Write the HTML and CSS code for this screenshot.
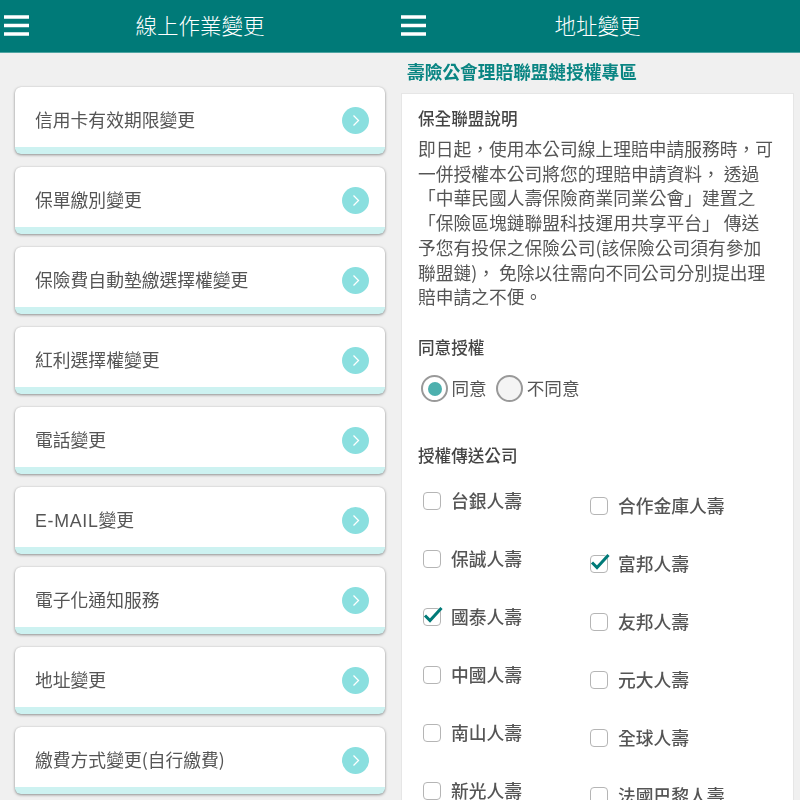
FILE: index.html
```html
<!DOCTYPE html>
<html lang="zh-Hant">
<head>
<meta charset="utf-8">
<title>線上作業變更</title>
<link rel="stylesheet" href="styles.css">
</head>
<body>
<div class="screens">
  <section class="screen">
    <header class="bar">
      <svg class="menu" width="26" height="21" viewBox="0 0 26 21"><path d="M0 2h25M0 10.500h25M0 19h25" stroke="#fff" stroke-width="3.500"/></svg>
      <h1 class="bar-title">線上作業變更</h1>
    </header>
    <div class="cards">
      <a class="card"><span class="card-body"><span class="card-text">信用卡有效期限變更</span><svg class="go" width="27" height="27" viewBox="0 0 27 27"><circle cx="13.5" cy="13.5" r="13.5" fill="#8adfdf"/><path d="M11.5 8.5l5 5-5 5" fill="none" stroke="#fff" stroke-width="1.3"/></svg></span></a>
      <a class="card"><span class="card-body"><span class="card-text">保單繳別變更</span><svg class="go" width="27" height="27" viewBox="0 0 27 27"><circle cx="13.5" cy="13.5" r="13.5" fill="#8adfdf"/><path d="M11.5 8.5l5 5-5 5" fill="none" stroke="#fff" stroke-width="1.3"/></svg></span></a>
      <a class="card"><span class="card-body"><span class="card-text">保險費自動墊繳選擇權變更</span><svg class="go" width="27" height="27" viewBox="0 0 27 27"><circle cx="13.5" cy="13.5" r="13.5" fill="#8adfdf"/><path d="M11.5 8.5l5 5-5 5" fill="none" stroke="#fff" stroke-width="1.3"/></svg></span></a>
      <a class="card"><span class="card-body"><span class="card-text">紅利選擇權變更</span><svg class="go" width="27" height="27" viewBox="0 0 27 27"><circle cx="13.5" cy="13.5" r="13.5" fill="#8adfdf"/><path d="M11.5 8.5l5 5-5 5" fill="none" stroke="#fff" stroke-width="1.3"/></svg></span></a>
      <a class="card"><span class="card-body"><span class="card-text">電話變更</span><svg class="go" width="27" height="27" viewBox="0 0 27 27"><circle cx="13.5" cy="13.5" r="13.5" fill="#8adfdf"/><path d="M11.5 8.5l5 5-5 5" fill="none" stroke="#fff" stroke-width="1.3"/></svg></span></a>
      <a class="card"><span class="card-body"><span class="card-text"><span class="latin">E-MAIL</span>變更</span><svg class="go" width="27" height="27" viewBox="0 0 27 27"><circle cx="13.5" cy="13.5" r="13.5" fill="#8adfdf"/><path d="M11.5 8.5l5 5-5 5" fill="none" stroke="#fff" stroke-width="1.3"/></svg></span></a>
      <a class="card"><span class="card-body"><span class="card-text">電子化通知服務</span><svg class="go" width="27" height="27" viewBox="0 0 27 27"><circle cx="13.5" cy="13.5" r="13.5" fill="#8adfdf"/><path d="M11.5 8.5l5 5-5 5" fill="none" stroke="#fff" stroke-width="1.3"/></svg></span></a>
      <a class="card"><span class="card-body"><span class="card-text">地址變更</span><svg class="go" width="27" height="27" viewBox="0 0 27 27"><circle cx="13.5" cy="13.5" r="13.5" fill="#8adfdf"/><path d="M11.5 8.5l5 5-5 5" fill="none" stroke="#fff" stroke-width="1.3"/></svg></span></a>
      <a class="card"><span class="card-body"><span class="card-text">繳費方式變更(自行繳費)</span><svg class="go" width="27" height="27" viewBox="0 0 27 27"><circle cx="13.5" cy="13.5" r="13.5" fill="#8adfdf"/><path d="M11.5 8.5l5 5-5 5" fill="none" stroke="#fff" stroke-width="1.3"/></svg></span></a>
    </div>
  </section>
  <section class="screen">
    <header class="bar bar-right">
      <svg class="menu menu-right" width="26" height="21" viewBox="0 0 26 21"><path d="M0 2h25M0 10.500h25M0 19h25" stroke="#fff" stroke-width="3.500"/></svg>
      <h1 class="bar-title">地址變更</h1>
    </header>
    <h2 class="zone-title">壽險公會理賠聯盟鏈授權專區</h2>
    <div class="panel">
      <h3 class="label first">保全聯盟說明</h3>
      <p class="intro">即日起&#xFF0C;使用本公司線上理賠申請服務時&#xFF0C;可<br>一併授權本公司將您的理賠申請資料&#xFF0C; 透過<br>「中華民國人壽保險商業同業公會」建置之<br>「保險區塊鏈聯盟科技運用共享平台」 傳送<br>予您有投保之保險公司(該保險公司須有參加<br>聯盟鏈)&#xFF0C; 免除以往需向不同公司分別提出理<br>賠申請之不便。</p>
      <h3 class="label agree-label">同意授權</h3>
      <div class="radios">
        <span class="radio on"></span><span class="radio-text">同意</span>
        <span class="radio"></span><span class="radio-text">不同意</span>
      </div>
      <h3 class="label company-label">授權傳送公司</h3>
      <div class="companies">
        <ul class="col">
          <li class="item"><span class="box"></span><span class="item-text">台銀人壽</span></li>
          <li class="item"><span class="box"></span><span class="item-text">保誠人壽</span></li>
          <li class="item"><span class="box"><svg class="tick" width="21" height="18" viewBox="0 0 21 18"><path d="M3 8.500l5 5 11.500-12.500" fill="none" stroke="#007a78" stroke-width="3"/></svg></span><span class="item-text">國泰人壽</span></li>
          <li class="item"><span class="box"></span><span class="item-text">中國人壽</span></li>
          <li class="item"><span class="box"></span><span class="item-text">南山人壽</span></li>
          <li class="item"><span class="box"></span><span class="item-text">新光人壽</span></li>
        </ul>
        <ul class="col col-right">
          <li class="item"><span class="box"></span><span class="item-text">合作金庫人壽</span></li>
          <li class="item"><span class="box"><svg class="tick" width="21" height="18" viewBox="0 0 21 18"><path d="M3 8.500l5 5 11.500-12.500" fill="none" stroke="#007a78" stroke-width="3"/></svg></span><span class="item-text">富邦人壽</span></li>
          <li class="item"><span class="box"></span><span class="item-text">友邦人壽</span></li>
          <li class="item"><span class="box"></span><span class="item-text">元大人壽</span></li>
          <li class="item"><span class="box"></span><span class="item-text">全球人壽</span></li>
          <li class="item"><span class="box"></span><span class="item-text">法國巴黎人壽</span></li>
        </ul>
      </div>
    </div>
  </section>
</div>
</body>
</html>
```
FILE: styles.css
```css
* { box-sizing: border-box; }
html, body { margin: 0; padding: 0; height: 100%; overflow: hidden; }
body {
  background: #f0f0f0;
  font-family: "Noto Sans CJK TC", "Noto Sans", sans-serif;
  color: #555;
}
h1, h2, h3, p, ul { margin: 0; padding: 0; font-weight: inherit; }
ul { list-style: none; }
.screens { display: flex; width: 800px; height: 800px; overflow: hidden; filter: blur(0.45px); }
.screen { width: 400px; height: 800px; overflow: hidden; flex: none; }
.bar {
  height: 53px;
  background: #007a78;
  border-bottom: 1px solid #4fa5a3;
  position: relative;
  display: flex;
  align-items: center;
  justify-content: center;
  padding-bottom: 2px;
}
.bar-right { padding-right: 5px; }
.menu { position: absolute; left: 4px; top: 15px; }
.menu-right { left: 1px; }
.bar-title { color: #fff; font-size: 21.5px; font-weight: 300; line-height: 1; }
.cards { padding: 34px 15px 0; display: flex; flex-direction: column; gap: 13px; }
.card {
  display: block;
  height: 67px;
  flex: none;
  background: #fff;
  border-radius: 6px;
  border-bottom: 7px solid #cdf2f1;
  box-shadow: 0 1px 3px rgba(0,0,0,.4), 0 0 1px rgba(0,0,0,.2);
}
.card-body {
  height: 60px;
  padding: 6px 16px 0 20px;
  display: flex;
  align-items: center;
  justify-content: space-between;
  font-size: 17.8px;
  color: #555;
}
.card-text { padding-bottom: 3px; }
.latin { font-family: "Liberation Sans", sans-serif; letter-spacing: 0.7px; }
.go { flex: none; }
.zone-title {
  color: #0a8583;
  font-size: 17.7px;
  font-weight: 700;
  line-height: 26px;
  padding: 5px 0 0 7px;
  height: 40px;
}
.panel {
  margin-left: 1px;
  width: 393px;
  background: #fff;
  border: 1px solid #e6e6e6;
  height: 800px;
  padding: 0 16px;
}
.label { font-size: 16.6px; font-weight: 500; line-height: 24px; color: #444; }
.first { padding-top: 12px; box-sizing: content-box; height: 24px; }
.intro { font-size: 17.75px; line-height: 24.7px; margin-top: 6px; color: #555; white-space: nowrap; }
.agree-label { margin-top: 26px; }
.radios { display: flex; align-items: center; margin-top: 16px; height: 28px; padding-left: 3px; font-size: 17.6px; }
.radio {
  width: 27px; height: 27px; border-radius: 50%;
  border: 2.5px solid #999;
  background: #f4f4f4;
  flex: none;
  display: flex; align-items: center; justify-content: center;
}
.radio.on { background: #fff; }
.radio.on::after { content: ""; width: 14px; height: 14px; border-radius: 50%; background: #4db0ae; }
.radio-text { margin: 0 9.5px 0 3.5px; line-height: 26px; padding-bottom: 2px; }
.company-label { margin-top: 40px; }
.companies { display: flex; margin-top: 5px; }
.col { width: 167px; padding-left: 5px; }
.col-right { width: 190px; padding-top: 5px; }
.item {
  display: flex; align-items: center;
  height: 58px;
  font-size: 17.75px;
  font-weight: 500;
  color: #555;
  line-height: 26px;
}
.item-text { padding-bottom: 2px; }
.box {
  width: 18px; height: 18px;
  border: 1.5px solid #b5b5b5;
  border-radius: 4px;
  margin-right: 10px;
  flex: none;
  position: relative;
}
.tick { position: absolute; left: -2px; top: -1.5px; }
```
